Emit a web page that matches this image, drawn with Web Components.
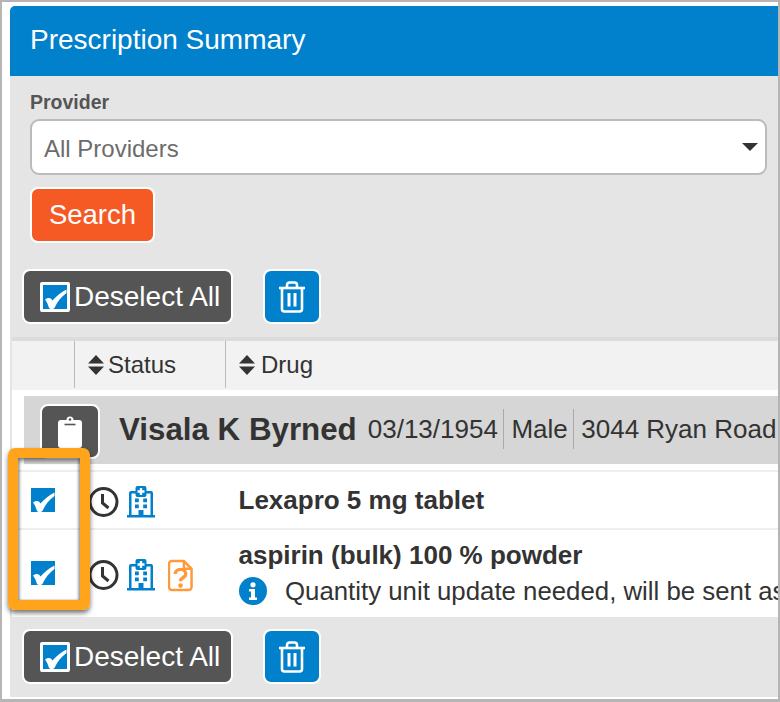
<!DOCTYPE html>
<html>
<head>
<meta charset="utf-8">
<title>Prescription Summary</title>
<style>
  html, body { margin: 0; height: 100%; }
  body { font-family: "Liberation Sans", Arial, sans-serif; color: #333; overflow: hidden; }
</style>
</head>
<body>

<rx-summary>
  <rx-filter slot="filter" label="Provider" value="All Providers"></rx-filter>

  <rx-actions slot="actions-top"></rx-actions>

  <rx-patient slot="table" name="Visala K Byrned">
    <span>03/13/1954</span>
    <span>Male</span>
    <span>3044 Ryan Road</span>
  </rx-patient>

  <rx-row slot="table">
    <rx-icon slot="status" name="clock"></rx-icon>
    <rx-icon slot="status" name="hospital"></rx-icon>
    <b>Lexapro 5 mg tablet</b>
  </rx-row>

  <rx-row slot="table" tall>
    <rx-icon slot="status" name="clock"></rx-icon>
    <rx-icon slot="status" name="hospital"></rx-icon>
    <rx-icon slot="status" name="doc"></rx-icon>
    <b>aspirin (bulk) 100 % powder</b>
    <rx-note>Quantity unit update needed, will be sent as</rx-note>
  </rx-row>

  <rx-actions slot="actions-bottom"></rx-actions>
</rx-summary>

<script>
// iconos dibujados a mano con los trazos de la captura
const ICONS = {
  clock: `<svg width="31" height="32" viewBox="0 0 31 32" fill="none" stroke="#333" stroke-width="3">
      <circle cx="15.500" cy="16" r="13.500"/>
      <path d="M14.500 8v9l6 5"/>
    </svg>`,
  hospital: `<svg width="28" height="32" viewBox="0 0 28 32">
      <path fill="#0180cc" d="M8.500 2a2 2 0 0 1 2-2h7a2 2 0 0 1 2 2v3H24a2 2 0 0 1 2 2v22h2v2.500H0V29h2V7a2 2 0 0 1 2-2h4.500z"/>
      <path fill="#fff" d="M4.500 7.500h4V9a2 2 0 0 0 2 2h7a2 2 0 0 0 2-2V7.500h4V29h-7v-5h-5v5h-7z"/>
      <path fill="#fff" d="M12.800 2h2.400v2.300h2.300v2.400h-2.300V9h-2.400V6.700h-2.300V4.300h2.300z"/>
      <path fill="#0180cc" d="M8 12.500h3.800v3.800H8zM16.200 12.500H20v3.800h-3.800zM8 18.500h3.800v3.800H8zM16.200 18.500H20v3.800h-3.800z"/>
    </svg>`,
  doc: `<svg width="25" height="33" viewBox="0 0 26 33" fill="none">
      <path d="M4 1.500h12.500L24.500 9.500V28.500a3 3 0 0 1-3 3H4a3 3 0 0 1-3-3V4.500a3 3 0 0 1 3-3z" stroke="#ff9a3c" stroke-width="2.600" fill="#fff"/>
      <path d="M16.500 1.500v8h8" stroke="#ff9a3c" stroke-width="2.400"/>
      <path d="M7.500 15c0-6.500 11-6.500 11 0c0 3.800-5.500 3.500-5.500 7.500" stroke="#ff9a3c" stroke-width="3.600"/>
      <circle cx="13" cy="27" r="2.400" fill="#ff9a3c"/>
    </svg>`,
  trash: `<svg width="28" height="32" viewBox="0 0 28 32" fill="none" stroke="#fff" stroke-width="2.600">
      <path d="M1 7h26"/>
      <path d="M9 6.500V4a2.500 2.500 0 0 1 2.500-2.500h5A2.500 2.500 0 0 1 19 4v2.500"/>
      <path d="M4 7v21a2.500 2.500 0 0 0 2.500 2.500h15A2.500 2.500 0 0 0 24 28V7"/>
      <path d="M11 12v13.500M17 12v13.500" stroke-width="3"/>
    </svg>`,
  clipboard: `<svg width="24" height="32" viewBox="0 0 24 32">
      <path fill="#fff" d="M3 4h5.500a3.500 3.500 0 0 1 7 0H21a3 3 0 0 1 3 3v22a3 3 0 0 1-3 3H3a3 3 0 0 1-3-3V7a3 3 0 0 1 3-3z"/>
      <circle cx="12" cy="3.500" r="1.300" fill="#555"/>
      <path d="M6.500 8.500h11" stroke="#555" stroke-width="1.600"/>
    </svg>`,
  sort: `<svg width="16" height="20" viewBox="0 0 16 20" fill="#333">
      <path d="M8 0l8 8.500H0zM0 11.500h16L8 20z"/>
    </svg>`,
  info: `<svg width="28" height="32" viewBox="0 0 28 32">
      <circle cx="14" cy="16" r="14" fill="#0180cc"/>
      <circle cx="14" cy="9.800" r="2.600" fill="#fff"/>
      <path fill="#fff" d="M10 14h6v8.500h2V25h-8v-2.500h2V16.500h-2z"/>
    </svg>`
}

// checkbox marcado: cuadrado azul y tilde blanca
function checkSvg(size) {
  return `<svg width="${size}" height="${size}" viewBox="0 0 24 24">
    <rect width="24" height="24" fill="#0180cc"/>
    <path fill="#fff" d="M2 14.500C4 12.500 8 12 9.500 15.500C13 11.500 18 7 23.500 4.500V8C18 12 14 17 11.500 23C10 24.500 7 24.500 6 23C5 20 4 17 2 14.500z"/>
  </svg>`
}

class RxIcon extends HTMLElement {
  constructor() {
    super()
    this.attachShadow({ mode: 'open' })
  }
  connectedCallback() {
    this.shadowRoot.innerHTML = `
      <style>
        :host { display: inline-flex; line-height: 0; }
      </style>
      ${ICONS[this.getAttribute('name')] ?? ''}
    `
  }
}

class RxFilter extends HTMLElement {
  constructor() {
    super()
    this.attachShadow({ mode: 'open' })
  }
  connectedCallback() {
    const label = this.getAttribute('label')
    const value = this.getAttribute('value')
    this.shadowRoot.innerHTML = `
      <style>
        :host { display: block; padding: 15px 11px 0 20px; }
        label { display: block; font-weight: bold; font-size: 19.500px; line-height: 22px; color: #555; margin-bottom: 6px; }
        .select {
          box-sizing: border-box; height: 56px; border: 2px solid #bbb; border-radius: 9px;
          background: #fff; display: flex; align-items: center; justify-content: space-between;
          padding: 4px 7px 0 12px; font-size: 24px; color: #6c6c6c;
        }
        .arrow { width: 0; height: 0; border: 8px solid transparent; border-top-color: #333; border-bottom-width: 0; margin-top: -4px; }
        button {
          display: block; margin-top: 12px; box-sizing: border-box; width: 125px; height: 56px;
          background: #f55a24; color: #fff; border: 2px solid #fff; border-radius: 8px;
          font: 27.500px "Liberation Sans", Arial, sans-serif; padding: 0;
        }
      </style>
      <label>${label}</label>
      <div class="select"><span>${value}</span><span class="arrow"></span></div>
      <button>Search</button>
    `
  }
}

class RxActions extends HTMLElement {
  constructor() {
    super()
    this.attachShadow({ mode: 'open' })
  }
  connectedCallback() {
    this.shadowRoot.innerHTML = `
      <style>
        :host { display: flex; gap: 30px; align-items: stretch; }
        button { box-sizing: border-box; height: 55px; border: 2px solid #fff; border-radius: 8px; padding: 0; color: #fff; display: flex; align-items: center; justify-content: center; }
        .deselect { width: 211px; background: #555; font: 28px "Liberation Sans", Arial, sans-serif; gap: 4px; justify-content: flex-start; padding-left: 16px; }
        .box { display: inline-flex; border: 3px solid #fff; border-radius: 2px; line-height: 0; }
        .trash { width: 58px; background: #0180cc; }
      </style>
      <button class="deselect"><span class="box">${checkSvg(24)}</span>Deselect All</button>
      <button class="trash"><rx-icon name="trash"></rx-icon></button>
    `
  }
}

class RxPatient extends HTMLElement {
  constructor() {
    super()
    this.attachShadow({ mode: 'open' })
  }
  connectedCallback() {
    const name = this.getAttribute('name')
    this.shadowRoot.innerHTML = `
      <style>
        :host { display: block; padding: 6px 0 6px 12px; background: #fff; }
        .band { height: 68px; background: #d6d6d6; display: flex; align-items: center; padding-left: 16px; white-space: nowrap; overflow: hidden; }
        .clip { box-sizing: border-box; width: 60px; height: 55px; margin-top: 3px; background: #555; border: 2px solid #fff; border-radius: 8px; display: flex; align-items: center; justify-content: center; margin-right: 19px; flex: none; }
        h2 { margin: 0 11px 0 0; font-size: 31.300px; line-height: 36px; font-weight: bold; color: #333; }
        .details { display: flex; font-size: 26px; color: #333; margin-top: -2px; }
        ::slotted(span) { padding: 0 5px 0 7.500px; border-right: 1px solid #aaa; line-height: 40px; }
        ::slotted(span:first-child) { padding-left: 0; }
        ::slotted(span:last-child) { border-right: 0; }
      </style>
      <div class="band">
        <span class="clip"><rx-icon name="clipboard"></rx-icon></span>
        <h2>${name}</h2>
        <span class="details"><slot></slot></span>
      </div>
    `
  }
}

class RxRow extends HTMLElement {
  constructor() {
    super()
    this.attachShadow({ mode: 'open' })
  }
  connectedCallback() {
    const tall = this.hasAttribute('tall')
    this.shadowRoot.innerHTML = `
      <style>
        :host {
          display: grid; grid-template-columns: 76px 137px 1fr; box-sizing: border-box;
          height: ${tall ? 89 : 58}px; background: #fff; border-top: 2px solid #eee; overflow: hidden;
        }
        .check { display: flex; padding: ${tall ? 31 : 16}px 0 0 19px; line-height: 0; align-items: flex-start; }
        .status { display: flex; gap: 8px; align-items: flex-start; padding-top: ${tall ? 29 : 14}px; }
        .drug { padding: ${tall ? 10 : 13}px 0 0 13.500px; font-size: 26px; line-height: 30px; color: #333; white-space: nowrap; min-width: 0; }
        ::slotted([name="doc"]) { margin-left: 5px; }
      </style>
      <div class="check">${checkSvg(24)}</div>
      <div class="status"><slot name="status"></slot></div>
      <div class="drug"><slot></slot></div>
    `
  }
}

class RxNote extends HTMLElement {
  constructor() {
    super()
    this.attachShadow({ mode: 'open' })
  }
  connectedCallback() {
    this.shadowRoot.innerHTML = `
      <style>
        :host { display: flex; align-items: center; gap: 18.500px; margin-top: 5px; font-size: 25.800px; font-weight: normal; }
      </style>
      <rx-icon name="info"></rx-icon><span><slot></slot></span>
    `
  }
}

class RxSummary extends HTMLElement {
  constructor() {
    super()
    this.attachShadow({ mode: 'open' })
  }
  connectedCallback() {
    this.shadowRoot.innerHTML = `
      <style>
        :host {
          display: flex; flex-direction: column; position: relative; box-sizing: border-box;
          width: 780px; height: 702px; overflow: hidden;
          border: solid #b5b5b5; border-width: 2px 2px 3px 2px; background: #fff; padding: 4px 0 2px 8px;
        }
        header {
          height: 70px; flex: none; background: #0180cc; color: #fff; border-top-left-radius: 5px;
          display: flex; align-items: center; padding: 0 0 2px 20px; box-sizing: border-box; font-size: 28px;
        }
        .panel { flex: 1; background: #e5e5e5; display: flex; flex-direction: column; min-height: 0; }
        .top, .bottom { padding-left: 12px; }
        .top { padding-top: 26px; height: 68px; flex: none; }
        .table { margin-left: 2px; flex: none; border-top: 4px solid #dcdcdc; }
        .head {
          display: grid; grid-template-columns: 62px 151px 1fr; height: 49px; background: #f2f2f2;
          font-size: 24px; color: #333;
        }
        .head div { display: flex; align-items: center; gap: 4px; padding-left: 13px; border-left: 1px solid #bbb; margin-bottom: 2px; }
        .head div:first-child { border-left: 0; }
        .head div:last-child { gap: 6px; }
        .bottom { padding-top: 12px; }
        /* recuadro naranja resaltando los checkboxes */
        .highlight {
          position: absolute; left: 6px; top: 446px; width: 82px; height: 162px; box-sizing: border-box;
          border: 10px solid #ffa41b; border-radius: 7px;
          box-shadow: 0 3px 5px rgba(0,0,0,.55), inset 0 3px 4px rgba(0,0,0,.45), inset 2px 0 2px rgba(0,0,0,.2), inset -2px 0 2px rgba(0,0,0,.2);
        }
      </style>
      <header>Prescription Summary</header>
      <div class="panel">
        <slot name="filter"></slot>
        <div class="top"><slot name="actions-top"></slot></div>
        <div class="table">
          <div class="head">
            <div></div>
            <div><rx-icon name="sort"></rx-icon>Status</div>
            <div><rx-icon name="sort"></rx-icon>Drug</div>
          </div>
          <slot name="table"></slot>
        </div>
        <div class="bottom"><slot name="actions-bottom"></slot></div>
      </div>
      <div class="highlight"></div>
    `
  }
}

customElements.define('rx-icon', RxIcon)
customElements.define('rx-filter', RxFilter)
customElements.define('rx-actions', RxActions)
customElements.define('rx-patient', RxPatient)
customElements.define('rx-row', RxRow)
customElements.define('rx-note', RxNote)
customElements.define('rx-summary', RxSummary)
</script>
</body>
</html>
